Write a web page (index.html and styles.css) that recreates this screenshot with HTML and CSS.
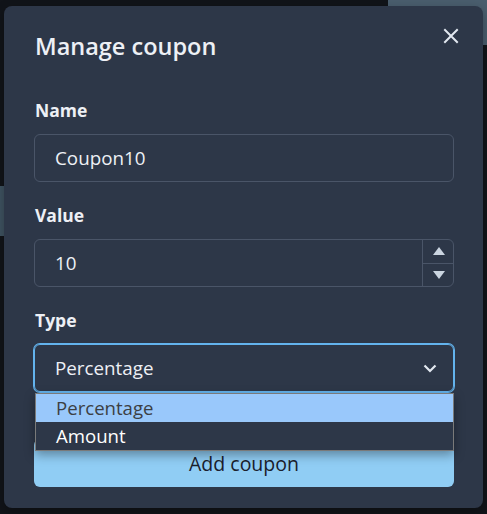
FILE: index.html
```html
<!DOCTYPE html>
<html lang="en">
<head>
<meta charset="utf-8">
<title>Manage coupon</title>
<link rel="stylesheet" href="styles.css">
</head>
<body>
<div class="backdrop">
  <div class="bg-block"></div>
  <div class="bg-strip"></div>
</div>
<div class="modal">
  <header class="modal-header">
    <h2 class="modal-title">Manage coupon</h2>
    <button class="close-btn" aria-label="Close">
      <svg width="16" height="16" viewBox="0 0 16 16"><path d="M2 2 L14 14 M14 2 L2 14" stroke="#e2e8f0" stroke-width="2" stroke-linecap="square"/></svg>
    </button>
  </header>
  <div class="modal-body">
    <div class="field">
      <label class="label">Name</label>
      <div class="input">Coupon10</div>
    </div>
    <div class="field">
      <label class="label">Value</label>
      <div class="input number">
        <span class="num-value">10</span>
        <div class="stepper">
          <div class="step"><svg width="12" height="8" viewBox="0 0 12 8"><path d="M6 0 L12 8 L0 8 Z" fill="#cbd5e0"/></svg></div>
          <div class="step"><svg width="12" height="8" viewBox="0 0 12 8"><path d="M0 0 L12 0 L6 8 Z" fill="#cbd5e0"/></svg></div>
        </div>
      </div>
    </div>
    <div class="field">
      <label class="label">Type</label>
      <div class="select-wrap">
        <div class="input select">
          <span>Percentage</span>
          <svg class="chev" width="14" height="9" viewBox="0 0 14 9"><path d="M1.5 1.5 L7 7 L12.5 1.5" fill="none" stroke="#e2e8f0" stroke-width="2.2"/></svg>
        </div>
        <ul class="options">
          <li class="opt active">Percentage</li>
          <li class="opt">Amount</li>
        </ul>
      </div>
    </div>
  </div>
  <footer class="modal-footer">
    <button class="primary">Add coupon</button>
  </footer>
</div>
</body>
</html>
```
FILE: styles.css
```css
* { box-sizing: border-box; }
html, body {
  margin: 0;
  height: 100%;
}
body {
  background: #111419;
  font-family: "Open Sans", "Noto Sans", "Liberation Sans", sans-serif;
  color: #edf0f5;
  overflow: hidden;
  position: relative;
}
.backdrop {
  position: absolute;
  inset: 0;
}
.bg-block {
  position: absolute;
  left: 388px;
  top: 0;
  width: 99px;
  height: 45px;
  background: #4a5e6e;
}
.bg-strip {
  position: absolute;
  left: 0;
  top: 186px;
  width: 6px;
  height: 50px;
  background: #3f5361;
}
.modal {
  position: absolute;
  left: 4px;
  top: 6px;
  width: 479px;
  height: 502px;
  background: #2d3748;
  border-radius: 8px;
  box-shadow: 0 4px 12px rgba(0,0,0,0.3);
}
.modal-header {
  display: flex;
  justify-content: space-between;
  align-items: flex-start;
  padding: 25px 16px 0 31px;
}
.modal-title {
  margin: 0;
  font-size: 23.5px;
  line-height: 30px;
  font-weight: 600;
  color: #edf0f5;
}
.close-btn {
  width: 32px;
  height: 32px;
  margin-top: -11px;
  background: transparent;
  border: 0;
  padding: 0;
  display: flex;
  align-items: center;
  justify-content: center;
}
.modal-body {
  padding: 37px 29px 0 30px;
  display: flex;
  flex-direction: column;
  gap: 21px;
}
.field {
  display: flex;
  flex-direction: column;
}
.label {
  font-size: 17.5px;
  font-weight: 700;
  line-height: 24px;
  margin: 0 0 12px 1px;
  color: #edf0f5;
}
.input {
  height: 48px;
  border: 1px solid #4a5568;
  border-radius: 6px;
  padding: 0 20px;
  display: flex;
  align-items: center;
  font-size: 18.8px;
  color: #edf0f5;
}
.number {
  padding-right: 0;
  justify-content: space-between;
}
.stepper {
  width: 31px;
  height: 100%;
  border-left: 1px solid #4a5568;
  display: flex;
  flex-direction: column;
}
.step {
  flex: 1;
  display: flex;
  align-items: center;
  justify-content: center;
  padding-left: 1px;
}
.step + .step {
  border-top: 1px solid #4a5568;
}
.select-wrap {
  position: relative;
}
.select {
  border-color: #63b3ed;
  box-shadow: 0 0 0 1px #63b3ed;
  justify-content: space-between;
  padding-right: 16px;
}
.options {
  position: absolute;
  left: 1px;
  right: 0;
  top: 49px;
  margin: 0;
  padding: 0;
  list-style: none;
  border: 1px solid #7a7a7a;
  background: #2d3748;
  box-shadow: 0 4px 10px rgba(0,0,0,0.35);
  z-index: 2;
}
.opt {
  height: 28px;
  line-height: 28px;
  padding-left: 20px;
  font-size: 18.6px;
  color: #ffffff;
}
.opt.active {
  background: #99c8fb;
  color: #3c3f44;
}
.modal-footer {
  padding: 47px 29px 0 30px;
}
.primary {
  width: 100%;
  height: 48px;
  border: 0;
  border-radius: 6px;
  background: #90cdf4;
  color: #1a202c;
  font-family: inherit;
  font-size: 19.5px;
  font-weight: 500;
}
```
